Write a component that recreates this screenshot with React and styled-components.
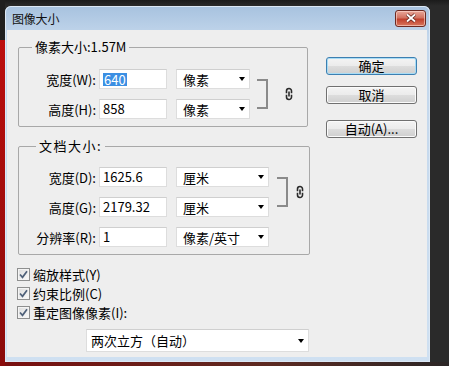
import React from "react";
import styled, { createGlobalStyle } from "styled-components";

const Global = createGlobalStyle`
  html, body {
    margin: 0;
    background: #262626;
  }
  body {
    font-family: "Noto Sans CJK SC", "Liberation Sans", sans-serif;
    font-size: 13px;
    color: #000;
  }
`;

const Page = styled.div`
  width: 449px;
  height: 366px;
  overflow: hidden;
  box-sizing: border-box;
  padding: 6px 0 0 5px;
  background:
    linear-gradient(#1f1f1f, #1f1f1f) left top / 5px 40px no-repeat,
    linear-gradient(#c20f0f, #8a0b0b) left top / 5px 100% no-repeat,
    linear-gradient(to right, #7a0f0f, #5c2a22 60%, #2b2626) left bottom / 100% 4px no-repeat,
    linear-gradient(#1b1b1b, #2a2a2a) left top / 100% 6px no-repeat,
    #2a2a2a;
`;

const Window = styled.div`
  width: 425px;
  height: 356px;
  display: flex;
  flex-direction: column;
  border-radius: 6px 6px 0 0;
  background: linear-gradient(#a7c2df, #c2d6eb 30px, #cfe0f1);
  box-shadow: inset 0 0 0 1px #dce8f5;
`;

const TitleBar = styled.div`
  height: 24px;
  flex: none;
  display: flex;
  align-items: center;
  justify-content: space-between;
  padding: 0 4px 0 7px;
`;

const Title = styled.span`
  font-size: 12px;
  letter-spacing: -0.2px;
  color: #111;
`;

const CloseButton = styled.div`
  width: 31px;
  height: 17px;
  box-sizing: border-box;
  border: 1px solid #6d2a22;
  border-radius: 3px;
  display: flex;
  align-items: center;
  justify-content: center;
  background: linear-gradient(#e9a89a, #d27261 45%, #c0402c 55%, #d9775e);
  box-shadow: inset 0 0 0 1px rgba(255, 220, 210, 0.6);
`;

const Body = styled.div`
  flex: 1;
  margin: 0 3px 5px 2px;
  background: #eeeeee;
  display: flex;
  padding: 10px 0 0 11px;
`;

const LeftCol = styled.div`
  width: 292px;
  display: flex;
  flex-direction: column;
`;

const Group = styled.fieldset`
  margin: ${(p) => p.$mt || 0}px 0 0 0;
  width: ${(p) => p.$w}px;
  box-sizing: border-box;
  min-width: 0;
  border: 1px solid #a8a8a8;
  border-radius: 2px;
  padding: ${(p) => p.$pt}px 0 7px 0;
`;

const Legend = styled.legend`
  margin-left: ${(p) => p.$ml}px;
  padding: 0 3px;
  line-height: 14px;
  letter-spacing: ${(p) => p.$ls || 0}px;
`;

const FieldGrid = styled.div`
  display: grid;
  grid-template-columns: 80px 77px ${(p) => p.$sw}px auto auto;
  grid-auto-rows: 20px;
  row-gap: 10px;
  align-items: center;
`;

const Label = styled.span`
  grid-column: 1;
  text-align: right;
  padding-right: 3px;
  white-space: nowrap;
`;

const TextBox = styled.div`
  grid-column: 2;
  width: 68px;
  height: 20px;
  box-sizing: border-box;
  background: #fff;
  border: 1px solid #dddddd;
  border-top-color: #cfcfcf;
  padding-left: 3px;
  display: flex;
  align-items: center;
  line-height: 18px;
`;

const Selected = styled.span`
  background: #3b8fe3;
  color: #fff;
  line-height: 13px;
  padding: 0 1px;
`;

const Select = styled.div`
  width: ${(p) => (p.$w ? `${p.$w}px` : "auto")};
  height: ${(p) => p.$h || 20}px;
  box-sizing: border-box;
  background: #fff;
  border: 1px solid #dddddd;
  border-top-color: #cfcfcf;
  display: flex;
  align-items: center;
  justify-content: space-between;
  padding: 0 4px 0 ${(p) => p.$pl || 6}px;
  white-space: nowrap;
`;

const Arrow = styled.span`
  width: 0;
  height: 0;
  border-left: 3.5px solid transparent;
  border-right: 3.5px solid transparent;
  border-top: 4px solid #000;
`;

const Bracket = styled.div`
  grid-column: 4;
  grid-row: 1 / span 2;
  align-self: center;
  width: 11px;
  height: 30px;
  box-sizing: border-box;
  margin-left: ${(p) => p.$ml}px;
  border: 2px solid #8a8a8a;
  border-left: none;
`;

const ChainBox = styled.div`
  grid-column: 5;
  grid-row: 1 / span 2;
  align-self: center;
  margin-left: 3px;
  display: flex;
`;

const Checks = styled.div`
  margin-top: 10px;
  display: flex;
  flex-direction: column;
`;

const CheckRow = styled.div`
  height: 19px;
  display: flex;
  align-items: center;
  gap: 3px;
  margin-left: -1px;
`;

const Box = styled.span`
  width: 13px;
  height: 13px;
  box-sizing: border-box;
  border: 1px solid #8e8f8f;
  background: linear-gradient(135deg, #dcdcdc, #fbfbfb);
  box-shadow: inset 0 0 0 1px #f4f4f4;
  display: flex;
  align-items: center;
  justify-content: center;
`;

const Resample = styled.div`
  margin: 7px 0 0 68px;
`;

const RightCol = styled.div`
  margin-left: 16px;
  padding-top: 17px;
  display: flex;
  flex-direction: column;
`;

const Button = styled.div`
  width: 91px;
  height: 18px;
  box-sizing: border-box;
  margin-top: ${(p) => p.$mt || 0}px;
  border: 1px solid ${(p) => (p.$default ? "#3c7fb1" : "#707070")};
  border-radius: 3px;
  background: linear-gradient(#f4f4f4, #ebebeb 50%, #dddddd 51%, #cfcfcf);
  box-shadow: inset 0 0 0 1px ${(p) => (p.$default ? "#a8dcf5" : "#fbfbfb")};
  display: flex;
  align-items: center;
  justify-content: center;
  line-height: 16px;
  white-space: nowrap;
`;

const Chain = () => (
  <svg width="8" height="14" viewBox="0 0 8 14">
    <path
      d="M1.5 6.2V4a2.5 2.5 0 0 1 5 0v2.2M1.5 7.8V10a2.5 2.5 0 0 0 5 0V7.8M4 4.5v5"
      fill="none"
      stroke="#2a2a2a"
      strokeWidth="1.6"
    />
  </svg>
);

const Tick = () => (
  <svg width="9" height="9" viewBox="0 0 9 9">
    <path d="M1 4.5l2.5 2.8L8 1.2" fill="none" stroke="#4e6079" strokeWidth="1.7" />
  </svg>
);

const Check = ({ children }) => (
  <CheckRow>
    <Box>
      <Tick />
    </Box>
    <span>{children}</span>
  </CheckRow>
);

const Field = ({ label, value, unit, sw, selected }) => (
  <>
    <Label>{label}</Label>
    <TextBox>{selected ? <Selected>{value}</Selected> : value}</TextBox>
    <Select $w={sw}>
      {unit}
      <Arrow />
    </Select>
  </>
);

export default function App() {
  return (
    <Page>
      <Global />
      <Window>
        <TitleBar>
          <Title>图像大小</Title>
          <CloseButton>
            <svg width="12" height="10" viewBox="0 0 12 10">
              <path d="M2 1.5l8 7M10 1.5l-8 7" stroke="#5a2019" strokeWidth="3.2" />
              <path d="M2 1.5l8 7M10 1.5l-8 7" stroke="#fff" strokeWidth="1.8" />
            </svg>
          </CloseButton>
        </TitleBar>
        <Body>
          <LeftCol>
            <Group $w={290} $pt={15}>
              <Legend $ml={13}>像素大小:1.57M</Legend>
              <FieldGrid $sw={74}>
                <Field label="宽度(W):" value="640" unit="像素" sw={74} selected />
                <Field label="高度(H):" value="858" unit="像素" sw={74} />
                <Bracket $ml={7} />
                <ChainBox>
                  <Chain />
                </ChainBox>
              </FieldGrid>
            </Group>
            <Group $w={292} $pt={14} $mt={12}>
              <Legend $ml={17} $ls={1.5}>文档大小:</Legend>
              <FieldGrid $sw={93}>
                <Field label="宽度(D):" value="1625.6" unit="厘米" sw={93} />
                <Field label="高度(G):" value="2179.32" unit="厘米" sw={93} />
                <Field label="分辨率(R):" value="1" unit="像素/英寸" sw={93} />
                <Bracket $ml={8} />
                <ChainBox>
                  <Chain />
                </ChainBox>
              </FieldGrid>
            </Group>
            <Checks>
              <Check>缩放样式(Y)</Check>
              <Check>约束比例(C)</Check>
              <Check>重定图像像素(I):</Check>
            </Checks>
            <Resample>
              <Select $w={223} $h={23} $pl={4}>
                两次立方（自动）
                <Arrow />
              </Select>
            </Resample>
          </LeftCol>
          <RightCol>
            <Button $default>确定</Button>
            <Button $mt={11}>取消</Button>
            <Button $mt={16}>自动(A)...</Button>
          </RightCol>
        </Body>
      </Window>
    </Page>
  );
}
